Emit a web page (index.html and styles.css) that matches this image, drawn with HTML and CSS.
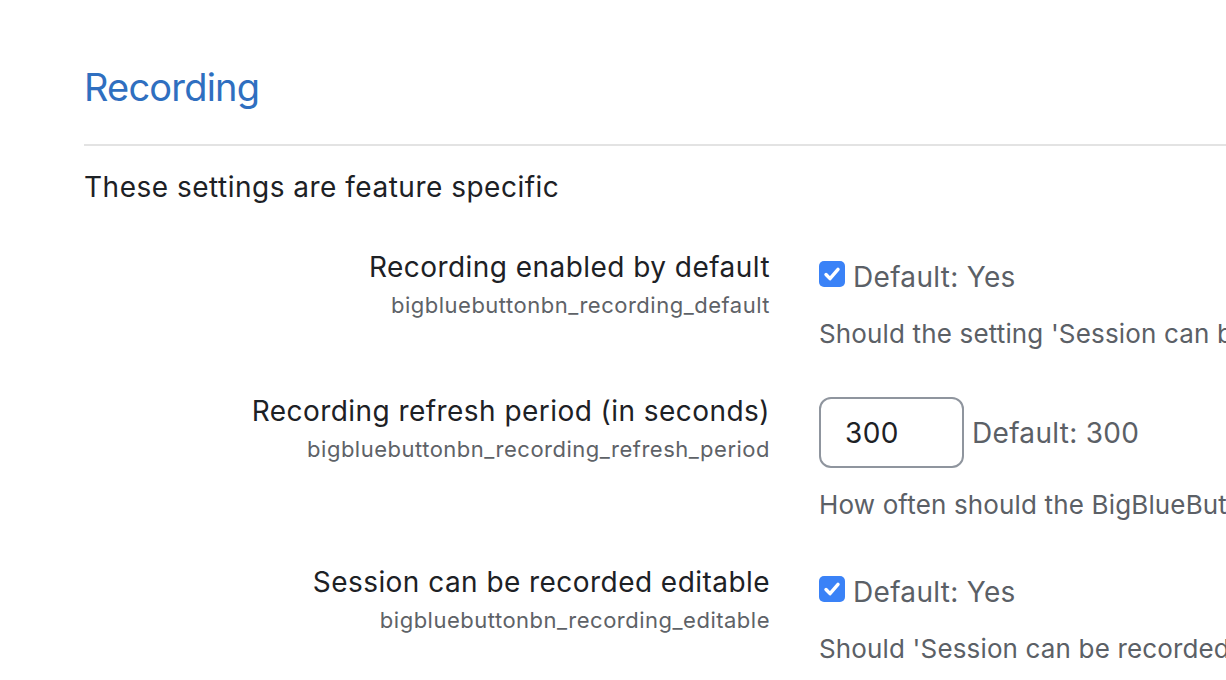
FILE: index.html
```html
<!DOCTYPE html>
<html lang="en">
<head>
    <meta charset="UTF-8">
    <title>Recording settings</title>
    <link rel="stylesheet" href="styles.css">
</head>
<body>

    <div id="settings">
        <h2 class="section-title">Recording</h2>
        <hr class="section-rule">
        <p class="section-intro">These settings are feature specific</p>

        <div class="setting setting-check">
            <div class="setting-label">
                <label>Recording enabled by default</label>
                <span class="shortname">bigbluebuttonbn_recording_default</span>
            </div>
            <div class="setting-value">
                <div class="value-line">
                    <span class="checkbox"><svg viewBox="0 0 26 26"><path d="M7 13.5l4 4.2 8-9.4" /></svg></span>
                    <span class="default-info">Default: Yes</span>
                </div>
                <p class="description">Should the setting 'Session can be recorded' be enabled by default when a new room or conference is added.</p>
            </div>
        </div>

        <div class="setting setting-text">
            <div class="setting-label">
                <label>Recording refresh period (in seconds)</label>
                <span class="shortname">bigbluebuttonbn_recording_refresh_period</span>
            </div>
            <div class="setting-value">
                <div class="value-line">
                    <input type="text" class="text-input" value="300">
                    <span class="default-info">Default: 300</span>
                </div>
                <p class="description">How often should the BigBlueButton server be checked for new recordings (in seconds).</p>
            </div>
        </div>

        <div class="setting setting-check">
            <div class="setting-label">
                <label>Session can be recorded editable</label>
                <span class="shortname">bigbluebuttonbn_recording_editable</span>
            </div>
            <div class="setting-value">
                <div class="value-line">
                    <span class="checkbox"><svg viewBox="0 0 26 26"><path d="M7 13.5l4 4.2 8-9.4" /></svg></span>
                    <span class="default-info">Default: Yes</span>
                </div>
                <p class="description">Should 'Session can be recorded' be editable by the teacher when a room or conference is added.</p>
            </div>
        </div>
    </div>

</body>
</html>
```

FILE: styles.css
```css
/* General */
* {
    margin: 0;
    padding: 0;
    box-sizing: border-box;
}
html, body {
    width: 100%;
    height: 100%;
    overflow: hidden;
    background: #fff;
    color: #1d2125;
    font-family: 'Inter', 'Liberation Sans', sans-serif;
}
#settings {
    padding: 60px 0 0 84px;
}
/* Heading */
.section-title {
    font-size: 38px;
    font-weight: 400;
    line-height: 54px;
    letter-spacing: -0.8px;
    color: #2f6fc0;
}
.section-rule {
    border: none;
    border-top: 2px solid #e3e3e3;
    margin: 30px 0 0;
}
.section-intro {
    font-size: 28px;
    line-height: 42px;
    letter-spacing: 0.5px;
    margin-top: 20px;
}
/* Setting rows */
.setting {
    display: grid;
    grid-template-columns: 686px 1fr;
    column-gap: 49px;
    margin-top: 37px;
    white-space: nowrap;
}
.section-intro + .setting {
    margin-top: 38px;
}
.setting-label {
    display: flex;
    flex-direction: column;
    align-items: flex-end;
}
.setting-label label {
    font-size: 28px;
    line-height: 42px;
    letter-spacing: 0.45px;
}
.shortname {
    font-size: 22px;
    line-height: 32px;
    letter-spacing: 0.5px;
    margin-top: 1px;
    color: #5e6267;
}
.setting-value {
    overflow: hidden;
}
.setting-check .setting-value {
    padding-top: 10px;
}
.setting-text .setting-value {
    padding-top: 7px;
}
.value-line {
    display: flex;
    align-items: center;
    gap: 8px;
}
.default-info {
    font-size: 28px;
    line-height: 42px;
    letter-spacing: 0.3px;
    color: #5b6066;
}
.description {
    font-size: 26px;
    line-height: 39px;
    letter-spacing: 0.15px;
    margin-top: 16px;
    color: #5b6066;
}
.setting-text .description {
    margin-top: 17px;
}
/* Controls */
.checkbox {
    width: 26px;
    height: 26px;
    margin-bottom: 6px;
    border-radius: 5px;
    background: #3a82f7;
    display: inline-block;
}
.checkbox svg {
    width: 26px;
    height: 26px;
    display: block;
}
.checkbox path {
    fill: none;
    stroke: #fff;
    stroke-width: 3.4;
    stroke-linecap: round;
    stroke-linejoin: round;
}
.text-input {
    width: 145px;
    height: 71px;
    border: 2px solid #8f959e;
    border-radius: 12px;
    padding: 0 24px;
    font-family: inherit;
    font-size: 28px;
    letter-spacing: 0.45px;
    color: #1d2125;
    outline: none;
}
```
